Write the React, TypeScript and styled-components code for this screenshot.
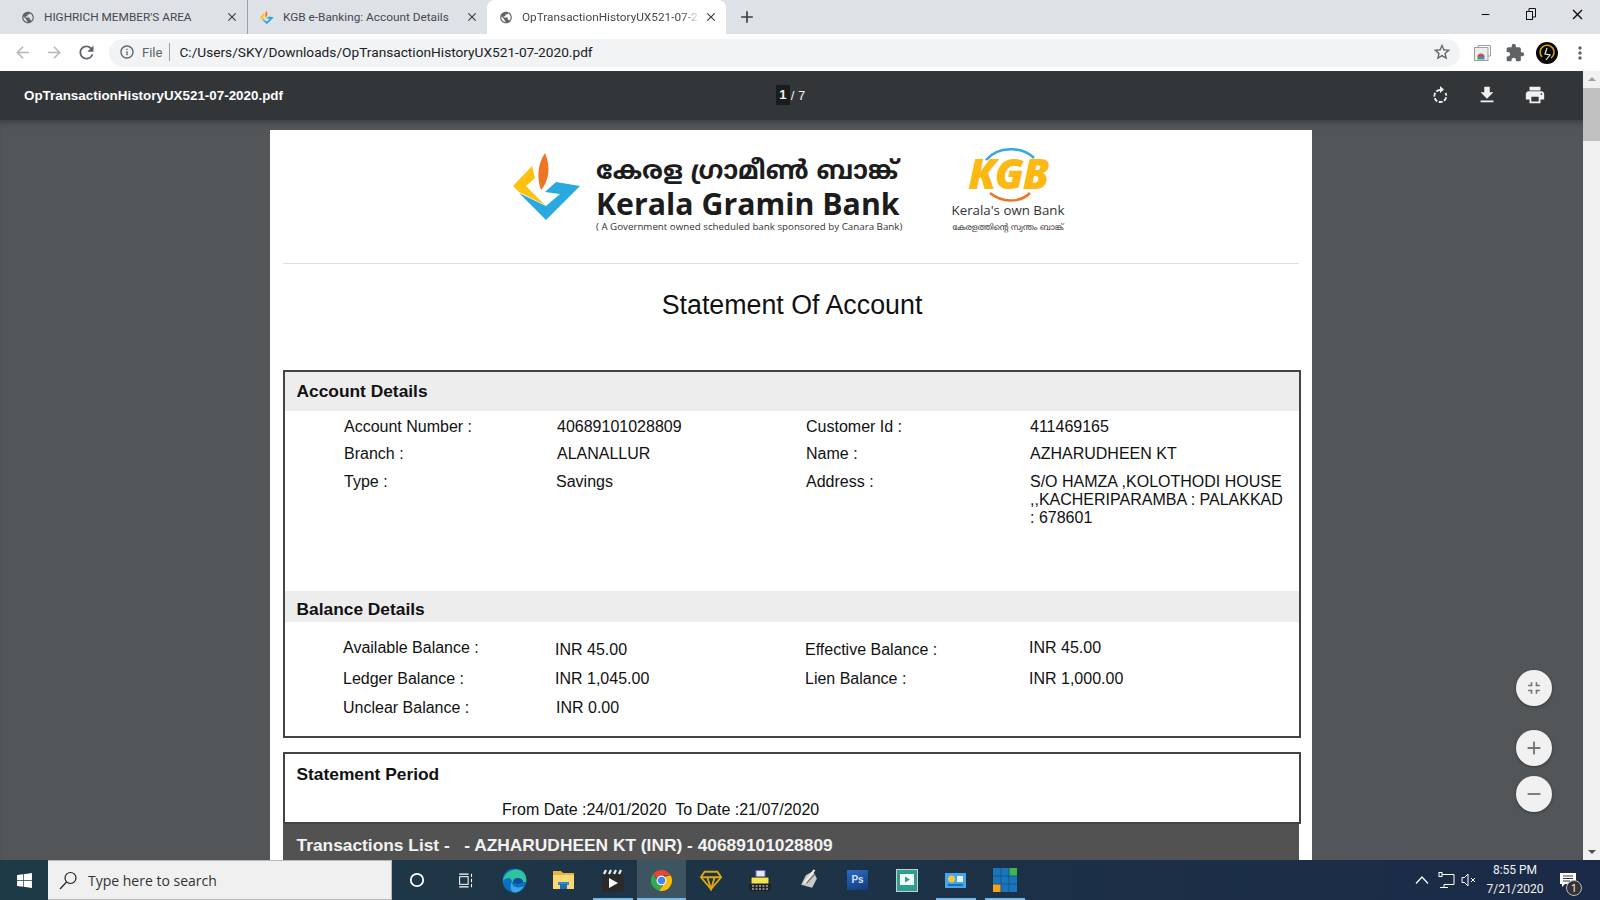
import React from 'react';
import styled, { createGlobalStyle } from 'styled-components';
import {
  MdAdd,
  MdArrowBack,
  MdArrowForward,
  MdClose,
  MdExtension,
  MdFileDownload,
  MdFullscreenExit,
  MdInfoOutline,
  MdMoreVert,
  MdPrint,
  MdPublic,
  MdRefresh,
  MdRemove,
  MdStarBorder,
} from 'react-icons/md';
import { FaWindows } from 'react-icons/fa';

const GlobalStyle = createGlobalStyle`
  html, body { margin: 0; padding: 0; background: #525659; }
  * { box-sizing: border-box; }
`;

const Page = styled.div`
  width: 1600px;
  height: 900px;
  display: flex;
  flex-direction: column;
  overflow: hidden;
  font-family: 'Liberation Sans', Arial, sans-serif;
`;

/* browser chrome */
const TabStrip = styled.div`
  height: 34px;
  background: #dee1e6;
  display: flex;
  align-items: stretch;
  flex: none;
`;

const Tab = styled.div<{ $active?: boolean; $width: number; $pad: number; $divider?: boolean }>`
  width: ${(p) => p.$width}px;
  padding-left: ${(p) => p.$pad}px;
  padding-right: 8px;
  display: flex;
  align-items: center;
  background: ${(p) => (p.$active ? '#fff' : 'transparent')};
  border-radius: ${(p) => (p.$active ? '8px 8px 0 0' : '0')};
  border-right: ${(p) => (p.$divider ? '1px solid #9aa0a6' : 'none')};
  background-clip: padding-box;
  color: #45494e;
  font-family: Roboto, sans-serif;
  font-size: 11.8px;
`;

const TabIcon = styled.span`
  width: 14px;
  height: 14px;
  margin-right: 9px;
  display: flex;
  align-items: center;
  justify-content: center;
  color: #5f6368;
  flex: none;
`;

const TabTitle = styled.span<{ $fade?: boolean }>`
  flex: 1;
  white-space: nowrap;
  ${(p) => (p.$fade ? 'mask-image: linear-gradient(90deg, #000 88%, transparent 98%);' : '')}
`;

const TabClose = styled.span`
  display: flex;
  flex: none;
  color: #3c4043;
`;

const NewTab = styled.span`
  margin-left: 11px;
  display: flex;
  align-items: center;
  color: #3c4043;
`;

const WindowControls = styled.div`
  margin-left: auto;
  display: flex;
  color: #111;
`;

const WindowButton = styled.span`
  width: 46px;
  height: 28px;
  display: flex;
  align-items: center;
  justify-content: center;
`;

const Toolbar = styled.div`
  height: 37px;
  background: #fff;
  flex: none;
  display: flex;
  align-items: center;
  padding-left: 6px;
`;

const NavButton = styled.span<{ $muted?: boolean }>`
  width: 32px;
  display: flex;
  justify-content: center;
  color: ${(p) => (p.$muted ? '#b4b7bb' : '#5f6368')};
`;

const Omnibox = styled.div`
  margin-left: 7px;
  width: 1351px;
  height: 28px;
  border-radius: 14px;
  background: #f1f3f4;
  display: flex;
  align-items: center;
  padding: 0 8px 1px 10px;
  font-family: Roboto, sans-serif;
  font-size: 13.7px;
  color: #202124;
`;

const FileChip = styled.span`
  display: flex;
  align-items: center;
  gap: 7px;
  color: #5f6368;
  font-size: 13px;
  padding-right: 7px;
  margin-right: 9px;
  border-right: 1px solid #9aa0a6;
  height: 18px;
`;

const OmniStar = styled.span`
  margin-left: auto;
  display: flex;
  color: #5f6368;
`;

const ToolbarActions = styled.div`
  display: flex;
  align-items: center;
  margin-left: 6px;
  color: #5f6368;
`;

const ActionSlot = styled.span`
  width: 32.5px;
  display: flex;
  justify-content: center;
`;

/* pdf viewer */
const Viewer = styled.div`
  flex: 1;
  min-height: 0;
  display: flex;
  flex-direction: column;
`;

const PdfBar = styled.div`
  height: 49px;
  flex: none;
  background: #323639;
  display: grid;
  grid-template-columns: 1fr auto 1fr;
  align-items: center;
  padding: 0 0 1px 24px;
  color: #fff;
  margin-right: 17px;
`;

const PdfName = styled.div`
  font-size: 13.4px;
  font-weight: 700;
`;

const PageCount = styled.div`
  display: flex;
  align-items: center;
  font-size: 13px;
  color: #f1f1f1;
  position: relative;
  left: -13px;
`;

const PageInput = styled.span`
  background: #191b1c;
  font-weight: 700;
  width: 14px;
  height: 20px;
  text-align: center;
  line-height: 20px;
  margin-right: 1px;
`;

const PdfActions = styled.div`
  justify-self: end;
  display: flex;
  gap: 26px;
  margin-right: 37px;
  align-items: center;
  color: #f1f1f1;
`;

const ViewerBody = styled.div`
  position: relative;
  flex: 1;
  min-height: 0;
  display: flex;
  flex-direction: column;
  margin-right: 17px;
  background: #525659;
  padding: 10px 0 0 270px;
  overflow: hidden;
  box-shadow: inset 0 6px 6px -4px rgba(0, 0, 0, 0.3);
`;

const Paper = styled.div`
  width: 1042px;
  flex: 1;
  background: #fff;
  padding: 0 11px 0 13px;
  color: #111;
  overflow: hidden;
`;

const LogoRow = styled.header`
  height: 134px;
  border-bottom: 1px solid #e0e0e0;
  display: flex;
  align-items: flex-start;
  padding: 23px 0 0 230px;
  margin-right: 2px;
`;

const BankMark = styled.svg`
  width: 68px;
  height: 68px;
  flex: none;
`;

const BankText = styled.div`
  margin: 4px 0 0 15px;
  width: 330px;
  display: flex;
  flex-direction: column;
  font-family: 'Open Sans', 'Noto Sans', sans-serif;
  color: #1c1c1c;
`;

const BankLocal = styled.div`
  font-family: 'Noto Sans Malayalam', 'Noto Sans', sans-serif;
  font-size: 25.5px;
  line-height: 32px;
  font-weight: 700;
  white-space: nowrap;
`;

const BankEnglish = styled.div`
  font-size: 30.3px;
  line-height: 30px;
  font-weight: 700;
  white-space: nowrap;
`;

const BankSponsor = styled.div`
  font-size: 9.75px;
  line-height: 14px;
  margin-top: 1px;
  white-space: nowrap;
  color: #333;
`;

const KgbBlock = styled.div`
  margin: -5px 0 0 23px;
  width: 118px;
  display: flex;
  flex-direction: column;
  align-items: center;
  font-family: 'Open Sans', sans-serif;
  color: #333;
`;

const KgbMark = styled.svg`
  width: 108px;
  height: 54px;
  flex: none;
`;

const KgbTagline = styled.div`
  font-size: 13.3px;
  line-height: 16px;
  white-space: nowrap;
`;

const KgbLocal = styled.div`
  font-family: 'Noto Sans Malayalam', 'Noto Sans', sans-serif;
  font-size: 8.2px;
  line-height: 12px;
  margin-top: 4px;
  white-space: nowrap;
`;

const DocTitle = styled.h1`
  margin: 0;
  height: 106px;
  padding-top: 25px;
  text-align: center;
  font-size: 26.8px;
  line-height: 32px;
  font-weight: 400;
  color: #111;
`;

const InfoBox = styled.section`
  border: 2px solid #444;
`;

const PeriodBox = styled(InfoBox)`
  margin-top: 14px;
  height: 72px;
`;

const SectionTitle = styled.h2<{ $height: number; $plain?: boolean; $drop?: number }>`
  margin: 0;
  height: ${(p) => p.$height}px;
  line-height: ${(p) => p.$height}px;
  padding: ${(p) => p.$drop ?? 0}px 0 0 11.5px;
  font-size: 17.35px;
  font-weight: 700;
  color: #111;
  background: ${(p) => (p.$plain ? '#fff' : '#ededed')};
`;

const FieldGrid = styled.div<{ $rows: string; $top: number; $height: number }>`
  display: grid;
  grid-template-columns: 213px 249px 224px 1fr;
  grid-template-rows: ${(p) => p.$rows};
  padding: ${(p) => p.$top}px 10px 0 59px;
  height: ${(p) => p.$height}px;
  font-size: 16px;
  line-height: 18px;
`;

const Cell = styled.div<{ $dx?: number; $dy?: number }>`
  margin-left: ${(p) => p.$dx ?? 0}px;
  margin-top: ${(p) => p.$dy ?? 0}px;
`;

const PeriodLine = styled.div`
  padding-left: 217px;
  margin-top: 8px;
  font-size: 16px;
  line-height: 18px;
  white-space: pre;
`;

const TransactionsBar = styled.div`
  height: 40px;
  margin-right: 2px;
  padding: 10px 0 0 13.5px;
  background: #525252;
  color: #f2f2f2;
  font-size: 17.35px;
  line-height: 22px;
  font-weight: 700;
  white-space: pre;
`;

const FabStack = styled.div`
  position: absolute;
  right: 31px;
  bottom: 48px;
  display: flex;
  flex-direction: column;
  gap: 10px;
`;

const Fab = styled.span<{ $gap?: number }>`
  width: 36px;
  height: 36px;
  margin-bottom: ${(p) => p.$gap ?? 0}px;
  border-radius: 50%;
  background: #f1f1f1;
  color: #757575;
  display: flex;
  align-items: center;
  justify-content: center;
  box-shadow: 0 1px 3px rgba(0, 0, 0, 0.35);
`;

const ScrollTrack = styled.div`
  position: absolute;
  right: 0;
  top: 71px;
  bottom: 40px;
  width: 17px;
  background: #f1f1f1;
  display: flex;
  flex-direction: column;
  align-items: center;
`;

const ScrollArrow = styled.span<{ $down?: boolean }>`
  width: 0;
  height: 0;
  margin: ${(p) => (p.$down ? 'auto 0 6px' : '6px 0 0')};
  border-left: 4px solid transparent;
  border-right: 4px solid transparent;
  border-bottom: ${(p) => (p.$down ? 'none' : '4px solid #a3a3a3')};
  border-top: ${(p) => (p.$down ? '4px solid #505050' : 'none')};
`;

const ScrollThumb = styled.span`
  width: 17px;
  height: 53px;
  margin-top: 7px;
  background: #c1c1c1;
`;

/* taskbar */
const Taskbar = styled.footer`
  height: 40px;
  flex: none;
  display: flex;
  align-items: stretch;
  background: linear-gradient(90deg, #1f3a47 0%, #1d3346 50%, #1a2a48 100%);
  color: #fff;
`;

const StartButton = styled.span`
  width: 48px;
  display: flex;
  align-items: center;
  justify-content: center;
`;

const SearchBox = styled.div`
  width: 344px;
  display: flex;
  align-items: center;
  gap: 10px;
  padding-left: 11px;
  background: #f0f0f0;
  border: 1px solid #b9b9b9;
  border-width: 1px 1px 1px 0;
  color: #333;
  font-family: 'Open Sans', sans-serif;
  font-size: 14px;
`;

const TaskSlot = styled.span<{ $active?: boolean; $running?: boolean }>`
  position: relative;
  width: 49px;
  display: flex;
  align-items: center;
  justify-content: center;
  background: ${(p) => (p.$active ? '#3d5461' : 'transparent')};

  &::after {
    content: '';
    display: ${(p) => (p.$running ? 'block' : 'none')};
    position: absolute;
    bottom: 0;
    height: 2px;
    left: ${(p) => (p.$active ? 0 : 5)}px;
    right: ${(p) => (p.$active ? 0 : 4)}px;
    background: #76b9ed;
  }
`;

const PsTile = styled.span`
  width: 21px;
  height: 20px;
  background: linear-gradient(160deg, #2c6cc0, #123a7c);
  color: #cfe3fb;
  font-family: 'Liberation Sans', sans-serif;
  font-size: 10px;
  line-height: 20px;
  font-weight: 700;
  text-align: center;
`;

const Tray = styled.div`
  margin-left: auto;
  display: flex;
  align-items: center;
  color: #fff;
`;

const TrayIcon = styled.span<{ $width: number }>`
  width: ${(p) => p.$width}px;
  display: flex;
  justify-content: center;
`;

const Clock = styled.div`
  width: 64px;
  margin: 0 3px;
  text-align: center;
  font-family: Roboto, sans-serif;
  font-size: 12px;
  line-height: 19px;
  color: #f2f2f2;
`;

const Notify = styled.span`
  position: relative;
  width: 50px;
  padding-left: 10px;
  display: flex;
`;

const NotifyBadge = styled.span`
  position: absolute;
  left: 16px;
  top: 7px;
  width: 16px;
  height: 16px;
  border-radius: 50%;
  background: #333;
  border: 1px solid #bbb;
  font-family: 'Open Sans', sans-serif;
  font-size: 11px;
  line-height: 14px;
  text-align: center;
`;

const accountRows = [
  ['Account Number :', '40689101028809', 'Customer Id :', '411469165'],
  ['Branch :', 'ALANALLUR', 'Name :', 'AZHARUDHEEN KT'],
];

const Bank = () => (
  <BankMark viewBox="0 0 68 68">
    <polygon points="0,33 19,13 22,25 13,33 32,52 6,39" fill="#fdc20f" />
    <path d="M32 0 C24 12 24 26 28 37 C36 28 38 14 32 0Z" fill="#ee7623" />
    <polygon points="6,40 33,67 67,33 43,29 32,39 47,41 33,53" fill="#29a9e0" />
  </BankMark>
);

const Kgb = () => (
  <KgbMark viewBox="0 0 108 54">
    <path d="M32 12 C44 -2 68 -2 80 10" fill="none" stroke="#35a8e0" strokeWidth="2.5" />
    <path d="M36 45 C48 55 66 55 76 45" fill="none" stroke="#ee7623" strokeWidth="2.5" />
    <text
      x="54"
      y="41"
      textAnchor="middle"
      fontFamily="'Open Sans', sans-serif"
      fontSize="42"
      fontStyle="italic"
      fontWeight="800"
      fill="#fdb913"
      letterSpacing="-1.5"
    >
      KGB
    </text>
  </KgbMark>
);

const RotateIcon = () => (
  <svg width="20" height="20" viewBox="0 0 20 20">
    <path d="M10 5 A6 6 0 1 0 15.5 8" fill="none" stroke="#f1f1f1" strokeWidth="1.8" strokeDasharray="4 1.6" />
    <polygon points="10,1 10,8 14,4.5" fill="#f1f1f1" />
  </svg>
);

const RestoreIcon = () => (
  <svg width="12" height="12" viewBox="0 0 12 12" fill="none" stroke="#111">
    <rect x="1.5" y="3.5" width="6" height="8" />
    <path d="M4 3.5 V0.5 H10.5 V9 H7.5" />
  </svg>
);

const CastIcon = () => (
  <svg width="17" height="16" viewBox="0 0 17 16">
    <path d="M4 2.5 V0.5 H16.5 V11 H14" fill="none" stroke="#9a9ea3" />
    <rect x="0.5" y="2.5" width="13.5" height="13" fill="#eceded" stroke="#9a9ea3" />
    <path d="M3.5 12 A3.5 3.5 0 0 1 10.5 12Z" fill="#d9483b" />
    <rect x="3.5" y="11.5" width="3.5" height="3" fill="#3aa757" />
    <rect x="7" y="11.5" width="3.5" height="3" fill="#4285f4" />
  </svg>
);

const AvatarIcon = () => (
  <svg width="22" height="22" viewBox="0 0 22 22">
    <circle cx="11" cy="11" r="11" fill="#060606" />
    <path d="M6 15 A7 7 0 1 1 15 16" fill="none" stroke="#e0a012" strokeWidth="1.6" />
    <path d="M11 6 L9 12 L14 13 L10 18" fill="none" stroke="#eee" strokeWidth="1.2" />
  </svg>
);

const ChromeLogo = () => (
  <svg width="23" height="23" viewBox="0 0 24 24">
    <path d="M12 1 A11 11 0 0 1 21.5 6.5 H12 A5.5 5.5 0 0 0 7 9.5 L3.4 5 A11 11 0 0 1 12 1Z" fill="#ea4335" />
    <path d="M3.4 5 L8 13.5 A5.5 5.5 0 0 0 13 17.4 L9.6 22.7 A11 11 0 0 1 3.4 5Z" fill="#34a853" />
    <path d="M21.5 6.5 A11 11 0 0 1 9.6 22.7 L15 14.8 A5.5 5.5 0 0 0 15.5 8 Z" fill="#fbbc05" />
    <circle cx="12" cy="12" r="4.6" fill="#4285f4" stroke="#fff" strokeWidth="1.2" />
  </svg>
);

const EdgeLogo = () => (
  <svg width="25" height="25" viewBox="0 0 25 25">
    <circle cx="12.5" cy="12.5" r="12" fill="#0b6fc2" />
    <path d="M1 13 C2 4 11 0 18 2 C23 4 25 9 24 14 L10 14 C10 10 5 8 1 13Z" fill="#2fc4a0" />
    <path d="M10 14 C10 19 15 21 22 18 C20 22 16 25 12 24.5 C8 24 8 16 10 14Z" fill="#39a7e8" />
    <ellipse cx="16" cy="13" rx="5" ry="3" fill="#0c4f9c" />
  </svg>
);

const FolderLogo = () => (
  <svg width="21" height="18" viewBox="0 0 21 18">
    <path d="M0 0 H8 L10 2 H21 V18 H0Z" fill="#e8b33f" />
    <rect x="0" y="4" width="21" height="14" fill="#fbd874" />
    <rect x="5" y="11" width="11" height="3" fill="#2a8fd8" />
    <rect x="7" y="13" width="7" height="5" fill="#1e6fb4" />
  </svg>
);

const ClapperLogo = () => (
  <svg width="23" height="23" viewBox="0 0 23 23">
    <rect x="0.5" y="5" width="22" height="18" rx="3" fill="#2a2a2a" />
    <path d="M3 5 L5 1 M8 5 L10 1 M13 5 L15 1 M18 5 L20 1" stroke="#eee" strokeWidth="2.2" />
    <polygon points="8,9 17,14 8,19" fill="#fff" />
  </svg>
);

const GemLogo = () => (
  <svg width="24" height="22" viewBox="0 0 24 24" fill="none" stroke="#e0a712" strokeWidth="2">
    <polygon points="5,3 19,3 23,9 12,22 1,9" />
    <path d="M1 9 H23 M8 9 L12 22 L16 9" />
  </svg>
);

const TypewriterLogo = () => (
  <svg width="22" height="21" viewBox="0 0 22 21">
    <rect x="7" y="0.5" width="9" height="7" fill="#e7e7f7" stroke="#6a6ae0" />
    <rect x="2" y="7" width="18" height="7" rx="1" fill="#f1e44f" stroke="#222" />
    <rect x="0" y="14" width="22" height="7" fill="#222" />
    <path d="M3 16 H19 M3 19 H19" stroke="#eee" strokeDasharray="2 1.5" />
  </svg>
);

const QuillLogo = () => (
  <svg width="22" height="22" viewBox="0 0 24 28">
    <polygon points="2,20 16,24 22,12 17,3 8,8" fill="#c9c9c9" />
    <path d="M6 18 L19 1" stroke="#eee" strokeWidth="2.5" />
    <path d="M9 18 L20 6" stroke="#6a6a6a" strokeWidth="1.5" />
  </svg>
);

const GreenPlayer = () => (
  <svg width="22" height="23" viewBox="0 0 22 23">
    <rect x="0.5" y="0.5" width="21" height="22" fill="#2e9f8f" stroke="#ccc" />
    <rect x="4" y="5" width="14" height="11" fill="#f4f8f6" />
    <polygon points="9,7.5 14,10.5 9,13.5" fill="#2e9f8f" />
  </svg>
);

const BlueChart = () => (
  <svg width="21" height="15" viewBox="0 0 21 15">
    <rect width="21" height="15" fill="#46a6e6" />
    <circle cx="6.5" cy="6" r="3.5" fill="#f5c542" />
    <rect x="12" y="3" width="6" height="6" fill="#e3f2fc" />
    <rect x="3" y="11" width="15" height="2" fill="#1a6fb5" />
  </svg>
);

const TileGrid = () => (
  <svg width="24" height="24" viewBox="0 0 24 24">
    <rect width="24" height="24" fill="#1b75bb" />
    <rect x="16" width="8" height="8" fill="#3fb54a" />
    <rect y="16" width="8" height="8" fill="#f7a11a" />
    <path d="M8 0 V24 M16 0 V24 M0 8 H24 M0 16 H24" stroke="#12568f" strokeWidth="1" />
  </svg>
);

const App = () => (
  <Page>
    <GlobalStyle />
    <TabStrip>
      <Tab $width={248} $pad={21} $divider>
        <TabIcon><MdPublic size={17} /></TabIcon>
        <TabTitle>HIGHRICH MEMBER'S AREA</TabTitle>
        <TabClose><MdClose size={14} /></TabClose>
      </Tab>
      <Tab $width={239} $pad={12}>
        <TabIcon>
          <svg width="15" height="15" viewBox="0 0 68 68">
            <polygon points="0,33 19,13 22,25 13,33 32,52 6,39" fill="#fdc20f" />
            <path d="M32 0 C24 12 24 26 28 37 C36 28 38 14 32 0Z" fill="#ee7623" />
            <polygon points="6,40 33,67 67,33 43,29 32,39 47,41 33,53" fill="#29a9e0" />
          </svg>
        </TabIcon>
        <TabTitle>KGB e-Banking: Account Details</TabTitle>
        <TabClose><MdClose size={14} /></TabClose>
      </Tab>
      <Tab $width={239} $pad={12} $active>
        <TabIcon><MdPublic size={17} /></TabIcon>
        <TabTitle $fade>OpTransactionHistoryUX521-07-2</TabTitle>
        <TabClose><MdClose size={14} /></TabClose>
      </Tab>
      <NewTab><MdAdd size={20} /></NewTab>
      <WindowControls>
        <WindowButton><MdRemove size={13} /></WindowButton>
        <WindowButton><RestoreIcon /></WindowButton>
        <WindowButton><MdClose size={17} /></WindowButton>
      </WindowControls>
    </TabStrip>

    <Toolbar>
      <NavButton $muted><MdArrowBack size={19} /></NavButton>
      <NavButton $muted><MdArrowForward size={19} /></NavButton>
      <NavButton><MdRefresh size={21} /></NavButton>
      <Omnibox>
        <FileChip><MdInfoOutline size={16} />File</FileChip>
        C:/Users/SKY/Downloads/OpTransactionHistoryUX521-07-2020.pdf
        <OmniStar><MdStarBorder size={20} /></OmniStar>
      </Omnibox>
      <ToolbarActions>
        <ActionSlot><CastIcon /></ActionSlot>
        <ActionSlot><MdExtension size={20} /></ActionSlot>
        <ActionSlot><AvatarIcon /></ActionSlot>
        <ActionSlot><MdMoreVert size={20} /></ActionSlot>
      </ToolbarActions>
    </Toolbar>

    <Viewer>
      <PdfBar>
        <PdfName>OpTransactionHistoryUX521-07-2020.pdf</PdfName>
        <PageCount><PageInput>1</PageInput>/ 7</PageCount>
        <PdfActions>
          <RotateIcon />
          <MdFileDownload size={22} />
          <MdPrint size={22} />
        </PdfActions>
      </PdfBar>
      <ViewerBody>
        <Paper>
          <LogoRow>
            <Bank />
            <BankText>
              <BankLocal>കേരള ഗ്രാമീൺ ബാങ്ക്</BankLocal>
              <BankEnglish>Kerala Gramin Bank</BankEnglish>
              <BankSponsor>( A Government owned scheduled bank sponsored by Canara Bank)</BankSponsor>
            </BankText>
            <KgbBlock>
              <Kgb />
              <KgbTagline>Kerala's own Bank</KgbTagline>
              <KgbLocal>കേരളത്തിന്റെ സ്വന്തം ബാങ്ക്</KgbLocal>
            </KgbBlock>
          </LogoRow>

          <DocTitle>Statement Of Account</DocTitle>

          <InfoBox>
            <SectionTitle $height={39}>Account Details</SectionTitle>
            <FieldGrid $rows="27px 28px auto" $top={7} $height={180}>
              {accountRows.map((row) => row.map((text) => <Cell key={text}>{text}</Cell>))}
              <Cell>Type :</Cell>
              <Cell $dx={-1}>Savings</Cell>
              <Cell>Address :</Cell>
              <Cell>
                S/O HAMZA ,KOLOTHODI HOUSE ,,KACHERIPARAMBA : PALAKKAD : 678601
              </Cell>
            </FieldGrid>
            <SectionTitle $height={31} $drop={3}>Balance Details</SectionTitle>
            <FieldGrid $rows="31px 29px 18px" $top={17} $height={114}>
              <Cell $dx={-1}>Available Balance :</Cell>
              <Cell $dx={-2} $dy={2}>INR 45.00</Cell>
              <Cell $dx={-1} $dy={2}>Effective Balance :</Cell>
              <Cell $dx={-1}>INR 45.00</Cell>
              <Cell $dx={-1}>Ledger Balance :</Cell>
              <Cell $dx={-2}>INR 1,045.00</Cell>
              <Cell $dx={-1}>Lien Balance :</Cell>
              <Cell $dx={-1}>INR 1,000.00</Cell>
              <Cell $dx={-1}>Unclear Balance :</Cell>
              <Cell $dx={-1}>INR 0.00</Cell>
            </FieldGrid>
          </InfoBox>

          <PeriodBox>
            <SectionTitle $height={39} $drop={1} $plain>Statement Period</SectionTitle>
            <PeriodLine>From Date :24/01/2020  To Date :21/07/2020</PeriodLine>
          </PeriodBox>
          <TransactionsBar>Transactions List -   - AZHARUDHEEN KT (INR) - 40689101028809</TransactionsBar>
        </Paper>
        <FabStack>
          <Fab $gap={14}><MdFullscreenExit size={20} /></Fab>
          <Fab><MdAdd size={22} /></Fab>
          <Fab><MdRemove size={22} /></Fab>
        </FabStack>
      </ViewerBody>
      <ScrollTrack>
        <ScrollArrow />
        <ScrollThumb />
        <ScrollArrow $down />
      </ScrollTrack>
    </Viewer>

    <Taskbar>
      <StartButton><FaWindows size={17} /></StartButton>
      <SearchBox>
        <svg width="19" height="19" viewBox="0 0 19 19" fill="none" stroke="#222" strokeWidth="1.2">
          <circle cx="11.5" cy="7" r="5.5" />
          <path d="M7.5 11 L1 18" />
        </svg>
        Type here to search
      </SearchBox>
      <TaskSlot>
        <svg width="16" height="16" viewBox="0 0 18 18" fill="none" stroke="#fff" strokeWidth="2">
          <circle cx="9" cy="9" r="7" />
        </svg>
      </TaskSlot>
      <TaskSlot>
        <svg width="16" height="17" viewBox="0 0 18 20" fill="none" stroke="#fff" strokeWidth="1.2">
          <rect x="1.5" y="5.5" width="10" height="9" />
          <path d="M1 2.5 H12 M1 17.5 H12 M15.5 2 V6 M15.5 8 V12 M15.5 14 V18" />
        </svg>
      </TaskSlot>
      <TaskSlot><EdgeLogo /></TaskSlot>
      <TaskSlot><FolderLogo /></TaskSlot>
      <TaskSlot $running><ClapperLogo /></TaskSlot>
      <TaskSlot $active $running><ChromeLogo /></TaskSlot>
      <TaskSlot><GemLogo /></TaskSlot>
      <TaskSlot><TypewriterLogo /></TaskSlot>
      <TaskSlot><QuillLogo /></TaskSlot>
      <TaskSlot><PsTile>Ps</PsTile></TaskSlot>
      <TaskSlot><GreenPlayer /></TaskSlot>
      <TaskSlot $running><BlueChart /></TaskSlot>
      <TaskSlot $running><TileGrid /></TaskSlot>
      <Tray>
        <TrayIcon $width={24}>
          <svg width="14" height="8" viewBox="0 0 14 8" fill="none" stroke="#fff" strokeWidth="1.2">
            <path d="M1 7.5 L7 1 L13 7.5" />
          </svg>
        </TrayIcon>
        <TrayIcon $width={24}>
          <svg width="17" height="17" viewBox="0 0 17 17" fill="none" stroke="#fff">
            <path d="M3.5 2.5 H16 V12.5 H6 V15.5 M2 15.5 H10" />
            <rect x="1" y="0.5" width="3" height="4" fill="#1d3346" />
          </svg>
        </TrayIcon>
        <TrayIcon $width={22}>
          <svg width="16" height="16" viewBox="0 0 16 16" fill="none" stroke="#fff" strokeWidth="1">
            <path d="M1 5.5 H3.5 L7 2 V14 L3.5 10.5 H1Z M10 6 L14 10 M14 6 L10 10" />
          </svg>
        </TrayIcon>
        <Clock>8:55 PM<br />7/21/2020</Clock>
        <Notify>
          <svg width="16" height="15" viewBox="0 0 16 15" fill="#fff">
            <path d="M0 0 H16 V11 H5 L2 14 V11 H0Z" />
            <path d="M3 3 H13 M3 5.5 H13 M3 8 H10" stroke="#333" strokeWidth="1" />
          </svg>
          <NotifyBadge>1</NotifyBadge>
        </Notify>
      </Tray>
    </Taskbar>
  </Page>
);

export default App;
